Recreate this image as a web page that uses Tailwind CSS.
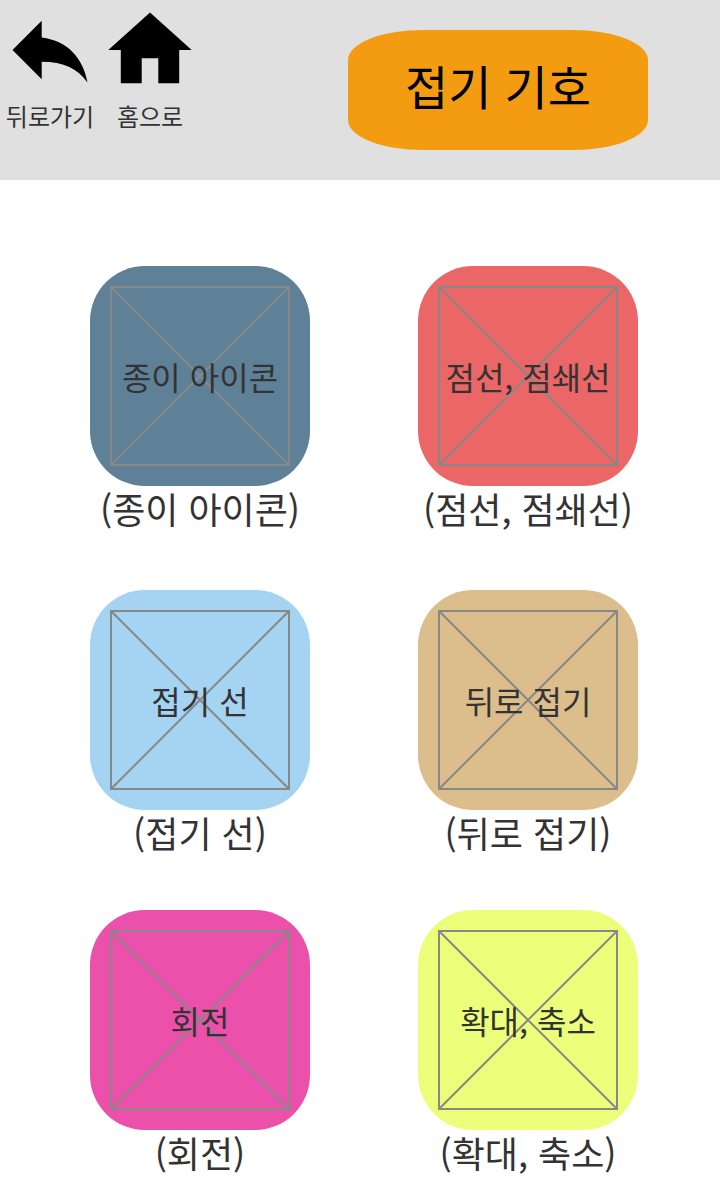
<!DOCTYPE html>
<html lang="ko">
<head>
<meta charset="utf-8">
<meta name="viewport" content="width=device-width, initial-scale=1">
<title>접기 기호</title>
<script src="https://cdn.jsdelivr.net/npm/@tailwindcss/browser@4"></script>
</head>
<body class="min-h-screen bg-white font-['Noto_Sans_CJK_KR',sans-serif] text-[#333333]">
<header class="flex h-[180px] items-start justify-between bg-[#e0e0e0] pr-[72px]">
  <nav class="flex">
    <button type="button" class="flex w-[100px] flex-col items-center">
      <svg class="h-[100px] w-[100px]" viewBox="0 0 100 100" aria-hidden="true"><path d="M12.500 50L41.700 20.800V37.500C68 41 83 58 87.500 82.500C78 69 64 61.700 41.700 61.700V79.200Z"/></svg>
      <span class="text-[24px] leading-[32px]">뒤로가기</span>
    </button>
    <button type="button" class="flex w-[100px] flex-col items-center">
      <svg class="h-[100px] w-[100px]" viewBox="0 0 100 100" aria-hidden="true"><path d="M50 12.500L91.700 50H79.200V83.300H58.300V58.300H41.700V83.300H20.800V50H8.300Z"/></svg>
      <span class="text-[24px] leading-[32px]">홈으로</span>
    </button>
  </nav>
  <h1 class="mt-[30px] flex h-[120px] w-[300px] items-center justify-center rounded-[25%] bg-[#f39c12] pb-3 text-[47px] leading-none text-black">접기 기호</h1>
</header>
<svg class="hidden" aria-hidden="true"><symbol id="frame" viewBox="0 0 180 180"><path d="M1 1H179V179H1ZM1 1L179 179M179 1L1 179" fill="none" stroke="#888888" stroke-width="2"/></symbol></svg>
<main class="grid grid-cols-[220px_220px] grid-rows-[324px_320px_auto] justify-between pt-[86px] pr-[82px] pl-[90px]">
  <button type="button" class="flex flex-col items-center">
    <span class="grid size-[220px] place-items-center rounded-[25%] bg-[#5f8197]"><svg class="col-start-1 row-start-1 size-[180px]" aria-hidden="true"><use href="#frame"/></svg><span class="col-start-1 row-start-1 text-[32px] leading-none whitespace-nowrap">종이 아이콘</span></span>
    <span class="text-[36px] leading-[44px] whitespace-nowrap">(종이 아이콘)</span>
  </button>
  <button type="button" class="flex flex-col items-center">
    <span class="grid size-[220px] place-items-center rounded-[25%] bg-[#eb6767]"><svg class="col-start-1 row-start-1 size-[180px]" aria-hidden="true"><use href="#frame"/></svg><span class="col-start-1 row-start-1 text-[32px] leading-none whitespace-nowrap">점선, 점쇄선</span></span>
    <span class="text-[36px] leading-[44px] whitespace-nowrap">(점선, 점쇄선)</span>
  </button>
  <button type="button" class="flex flex-col items-center">
    <span class="grid size-[220px] place-items-center rounded-[25%] bg-[#a5d4f3]"><svg class="col-start-1 row-start-1 size-[180px]" aria-hidden="true"><use href="#frame"/></svg><span class="col-start-1 row-start-1 text-[32px] leading-none whitespace-nowrap">접기 선</span></span>
    <span class="text-[36px] leading-[44px] whitespace-nowrap">(접기 선)</span>
  </button>
  <button type="button" class="flex flex-col items-center">
    <span class="grid size-[220px] place-items-center rounded-[25%] bg-[#dcbe8c]"><svg class="col-start-1 row-start-1 size-[180px]" aria-hidden="true"><use href="#frame"/></svg><span class="col-start-1 row-start-1 text-[32px] leading-none whitespace-nowrap">뒤로 접기</span></span>
    <span class="text-[36px] leading-[44px] whitespace-nowrap">(뒤로 접기)</span>
  </button>
  <button type="button" class="flex flex-col items-center">
    <span class="grid size-[220px] place-items-center rounded-[25%] bg-[#eb50ab]"><svg class="col-start-1 row-start-1 size-[180px]" aria-hidden="true"><use href="#frame"/></svg><span class="col-start-1 row-start-1 text-[32px] leading-none whitespace-nowrap">회전</span></span>
    <span class="text-[36px] leading-[44px] whitespace-nowrap">(회전)</span>
  </button>
  <button type="button" class="flex flex-col items-center">
    <span class="grid size-[220px] place-items-center rounded-[25%] bg-[#ecff7b]"><svg class="col-start-1 row-start-1 size-[180px]" aria-hidden="true"><use href="#frame"/></svg><span class="col-start-1 row-start-1 text-[32px] leading-none whitespace-nowrap">확대, 축소</span></span>
    <span class="text-[36px] leading-[44px] whitespace-nowrap">(확대, 축소)</span>
  </button>
</main>
</body>
</html>
